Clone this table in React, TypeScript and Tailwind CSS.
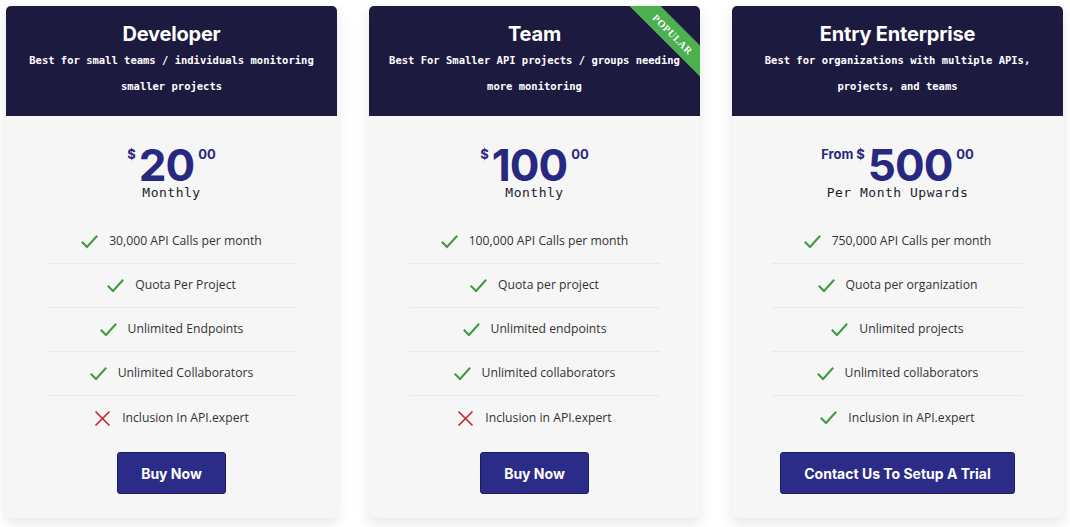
import React from "react";

type Feature = { text: string; ok: boolean };
type Plan = {
  title: string;
  sub: string[];
  prefix?: string;
  amount: string;
  period: string;
  features: Feature[];
  cta: string;
  popular?: boolean;
};

const plans: Plan[] = [
  {
    title: "Developer",
    sub: ["Best for small teams / individuals monitoring", "smaller projects"],
    amount: "20",
    period: "Monthly",
    features: [
      { text: "30,000 API Calls per month", ok: true },
      { text: "Quota Per Project", ok: true },
      { text: "Unlimited Endpoints", ok: true },
      { text: "Unlimited Collaborators", ok: true },
      { text: "Inclusion In API.expert", ok: false },
    ],
    cta: "Buy Now",
  },
  {
    title: "Team",
    sub: ["Best For Smaller API projects / groups needing", "more monitoring"],
    amount: "100",
    period: "Monthly",
    features: [
      { text: "100,000 API Calls per month", ok: true },
      { text: "Quota per project", ok: true },
      { text: "Unlimited endpoints", ok: true },
      { text: "Unlimited collaborators", ok: true },
      { text: "Inclusion in API.expert", ok: false },
    ],
    cta: "Buy Now",
    popular: true,
  },
  {
    title: "Entry Enterprise",
    sub: ["Best for organizations with multiple APIs,", "projects, and teams"],
    prefix: "From",
    amount: "500",
    period: "Per Month Upwards",
    features: [
      { text: "750,000 API Calls per month", ok: true },
      { text: "Quota per organization", ok: true },
      { text: "Unlimited projects", ok: true },
      { text: "Unlimited collaborators", ok: true },
      { text: "Inclusion in API.expert", ok: true },
    ],
    cta: "Contact Us To Setup A Trial",
  },
];

function Check() {
  return (
    <svg width="17" height="14" viewBox="0 0 17 14" fill="none">
      <path d="M1.5 7.5 L6 12 L15.5 1.5" stroke="#3c9a3c" strokeWidth="2" strokeLinecap="square" />
    </svg>
  );
}

function Cross() {
  return (
    <svg width="17" height="17" viewBox="0 0 17 17" fill="none">
      <path d="M1.5 1.5 L15.5 15.5 M15.5 1.5 L1.5 15.5" stroke="#c0282d" strokeWidth="1.6" />
    </svg>
  );
}

const mono = "font-['DejaVu_Sans_Mono','Liberation_Mono',monospace]";
const sans = "font-['Open_Sans','Noto_Sans',sans-serif]";
const head = "font-['Inter','Roboto',sans-serif]";

function Card({ p }: { p: Plan }) {
  return (
    <div className="w-[331px] rounded-t-[5px] bg-[#f6f6f6] shadow-[0_5px_14px_rgba(0,0,0,0.10)] flex flex-col">
      <div className="relative h-[110px] rounded-t-[5px] overflow-hidden bg-[#1d1a40] flex flex-col items-center pt-[15px]">
        <div className={`${head} text-white text-[20px] font-bold leading-[26px] tracking-[-0.2px]`}>{p.title}</div>
        {p.sub.map((s, i) => (
          <div key={i} className={`${mono} text-white text-[10.5px] font-bold leading-[26px] whitespace-nowrap`}>
            {s}
          </div>
        ))}
        {p.popular && (
          <div className="absolute top-[17px] right-[-39px] w-[132px] h-[22px] rotate-45 bg-[#4caf50] flex items-center justify-center">
            <span className="font-['Liberation_Serif',serif] text-white text-[10px] tracking-[0.5px] font-bold">POPULAR</span>
          </div>
        )}
      </div>
      <div className="flex flex-col items-center pt-[30px]">
        <div className="flex items-start text-[#27287f] h-[38px]">
          {p.prefix && (
            <span className={`${head} text-[13px] font-bold leading-[16px] mr-[3px]`}>{p.prefix}</span>
          )}
          <span className={`${head} text-[13px] font-bold leading-[16px] mr-[3px]`}>$</span>
          <span className={`${head} text-[44px] font-bold leading-[38px] tracking-[-1px]`}>{p.amount}</span>
          <span className={`${head} text-[13px] font-bold leading-[16px] ml-[4px]`}>00</span>
        </div>
        <div className={`${mono} text-[13px] text-[#1d1d2e] leading-[18px] tracking-[0.5px]`}>{p.period}</div>
      </div>
      <div className="mx-[40px] mt-[18px] flex flex-col">
        {p.features.map((f, i) => (
          <div
            key={i}
            className={`h-[44px] flex items-center justify-center gap-[11px] ${i < p.features.length - 1 ? "border-b border-[#ebebeb]" : ""}`}
          >
            {f.ok ? <Check /> : <Cross />}
            <span className={`${sans} text-[12.2px] text-[#333]`}>{f.text}</span>
          </div>
        ))}
      </div>
      <div className="flex justify-center mt-[12px] pb-[24px]">
        <button className={`${head} h-[42px] px-[23px] rounded-[3px] bg-[#2b2b88] border border-[#1b1b66] text-white text-[14px] font-bold`}>
          {p.cta}
        </button>
      </div>
    </div>
  );
}

export default function App() {
  return (
    <div className="w-[1070px] h-[527px] bg-white overflow-hidden">
      <div className="flex gap-[32px] pl-[6px] pt-[6px]">
        {plans.map((p) => (
          <Card key={p.title} p={p} />
        ))}
      </div>
    </div>
  );
}
